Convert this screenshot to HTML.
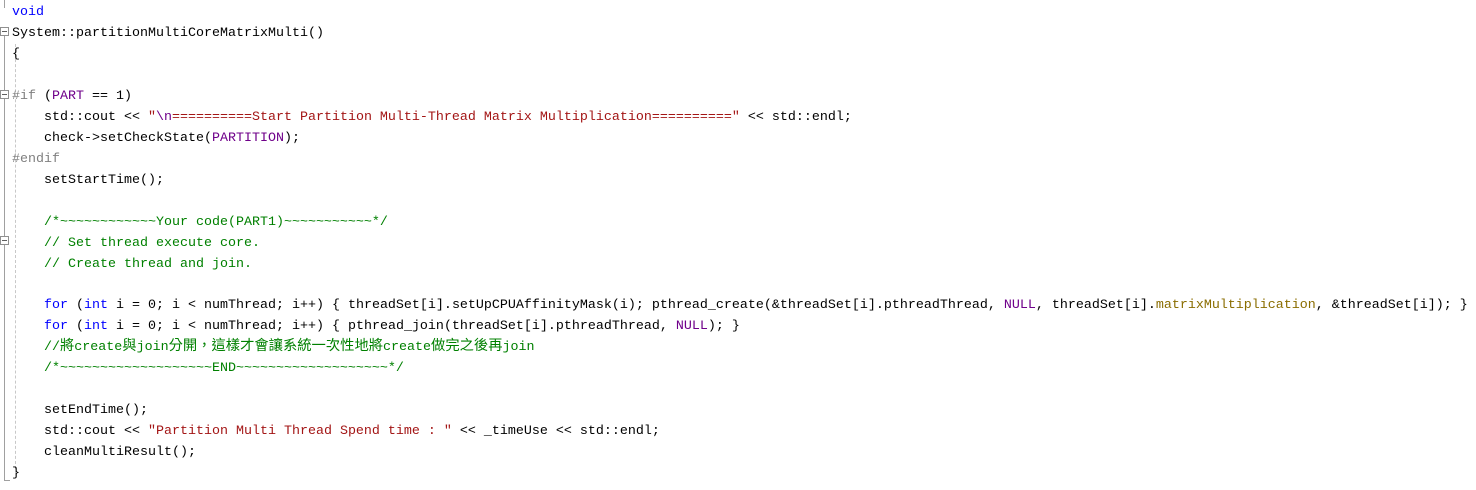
<!DOCTYPE html>
<html><head><meta charset="utf-8"><style>
body{margin:0;width:1476px;height:490px;background:#fff;overflow:hidden;position:relative}
.l{position:absolute;left:12px;white-space:pre;font-family:"Liberation Mono",monospace;font-size:13.33px;line-height:21px;height:21px;color:#000}
.k{color:#0000ff}.s{color:#a31515}.c{color:#008000}.m{color:#6f008a}.p{color:#808080}.f{color:#000}.e{color:#8a6d00}
.cj{font-family:"Noto Sans CJK TC",sans-serif;font-size:14.3px;line-height:0}
.g{position:absolute;left:4px;width:1px;background:#a0a0a0}
.d{position:absolute;left:15px;width:0;border-left:1px dashed #c8c8c8}
.b{position:absolute;left:0;width:7px;height:7px;border:1px solid #909090;background:#fff}
.b:after{content:"";position:absolute;left:1px;top:3px;width:5px;height:1px;background:#606060}
</style></head><body>
<div class="g" style="top:0;height:8px"></div>
<div class="g" style="top:32px;height:448px"></div>
<div class="g" style="top:480px;width:6px;height:1px"></div>
<div class="d" style="top:44px;height:430px"></div>
<div class="b" style="top:27px"></div>
<div class="b" style="top:90px"></div>
<div class="b" style="top:236px"></div>
<div class="l" style="top:2px"><span class="k">void</span></div>
<div class="l" style="top:23px">System::<span class="f">partitionMultiCoreMatrixMulti</span>()</div>
<div class="l" style="top:44px">{</div>
<div class="l" style="top:86px"><span class="p">#if</span> (<span class="m">PART</span> == 1)</div>
<div class="l" style="top:107px">    std::cout &lt;&lt; <span class="s">"<span class="m">\n</span>==========Start Partition Multi-Thread Matrix Multiplication=========="</span> &lt;&lt; std::endl;</div>
<div class="l" style="top:128px">    check-&gt;<span class="f">setCheckState</span>(<span class="m">PARTITION</span>);</div>
<div class="l" style="top:149px"><span class="p">#endif</span></div>
<div class="l" style="top:170px">    <span class="f">setStartTime</span>();</div>
<div class="l" style="top:212px">    <span class="c">/*~~~~~~~~~~~~Your code(PART1)~~~~~~~~~~~*/</span></div>
<div class="l" style="top:233px">    <span class="c">// Set thread execute core.</span></div>
<div class="l" style="top:254px">    <span class="c">// Create thread and join.</span></div>
<div class="l" style="top:295px">    <span class="k">for</span> (<span class="k">int</span> i = 0; i &lt; numThread; i++) { threadSet[i].<span class="f">setUpCPUAffinityMask</span>(i); <span class="f">pthread_create</span>(&amp;threadSet[i].pthreadThread, <span class="m">NULL</span>, threadSet[i].<span class="e">matrixMultiplication</span>, &amp;threadSet[i]); }</div>
<div class="l" style="top:316px">    <span class="k">for</span> (<span class="k">int</span> i = 0; i &lt; numThread; i++) { <span class="f">pthread_join</span>(threadSet[i].pthreadThread, <span class="m">NULL</span>); }</div>
<div class="l" style="top:337px">    <span class="c">//<span class="cj">將</span>create<span class="cj">與</span>join<span class="cj">分開，這樣才會讓系統一次性地將</span>create<span class="cj">做完之後再</span>join</span></div>
<div class="l" style="top:358px">    <span class="c">/*~~~~~~~~~~~~~~~~~~~END~~~~~~~~~~~~~~~~~~~*/</span></div>
<div class="l" style="top:400px">    <span class="f">setEndTime</span>();</div>
<div class="l" style="top:421px">    std::cout &lt;&lt; <span class="s">"Partition Multi Thread Spend time : "</span> &lt;&lt; _timeUse &lt;&lt; std::endl;</div>
<div class="l" style="top:442px">    <span class="f">cleanMultiResult</span>();</div>
<div class="l" style="top:463px">}</div>
</body></html>
